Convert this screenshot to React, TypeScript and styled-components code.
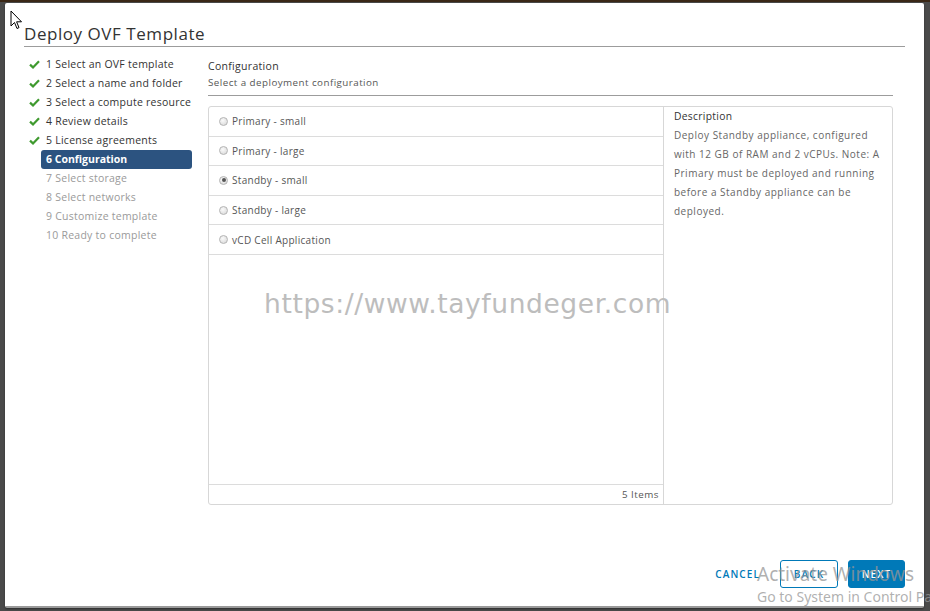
import React from "react";
import styled, { createGlobalStyle } from "styled-components";

const steps = [
  { label: "1 Select an OVF template", state: "done" },
  { label: "2 Select a name and folder", state: "done" },
  { label: "3 Select a compute resource", state: "done" },
  { label: "4 Review details", state: "done" },
  { label: "5 License agreements", state: "done" },
  { label: "6 Configuration", state: "active" },
  { label: "7 Select storage", state: "todo" },
  { label: "8 Select networks", state: "todo" },
  { label: "9 Customize template", state: "todo" },
  { label: "10 Ready to complete", state: "todo" },
];

const options = [
  "Primary - small",
  "Primary - large",
  "Standby - small",
  "Standby - large",
  "vCD Cell Application",
];

const App: React.FC = () => {
  return (
    <>
      <GlobalStyle />
      <Page>
        <Cursor width="13" height="20" viewBox="0 0 13 20">
          <path
            d="M1 1 L1 16 L4.5 12.5 L7 18.5 L9 17.6 L6.6 11.8 L11.5 11.8 Z"
            fill="#fff"
            stroke="#000"
            strokeWidth="1"
            strokeLinejoin="round"
          />
        </Cursor>
        <Modal>
          <Header>
            <Title>Deploy OVF Template</Title>
          </Header>
          <Body>
            <Nav>
              {steps.map((s) => (
                <NavItem key={s.label}>
                  <CheckSlot>
                    {s.state === "done" && (
                      <svg width="11" height="9" viewBox="0 0 11 9">
                        <path
                          d="M1 4.6 L4 7.4 L10 1.2"
                          fill="none"
                          stroke="#3f9a2f"
                          strokeWidth="2.2"
                        />
                      </svg>
                    )}
                  </CheckSlot>
                  <NavLabel $state={s.state}>{s.label}</NavLabel>
                </NavItem>
              ))}
            </Nav>
            <Content>
              <SectionTitle>Configuration</SectionTitle>
              <SectionSub>Select a deployment configuration</SectionSub>
              <Grid>
                <ListPane>
                  <Rows>
                    {options.map((o) => (
                      <Row key={o}>
                        <Radio $checked={o === "Standby - small"} />
                        <RowText>{o}</RowText>
                      </Row>
                    ))}
                  </Rows>
                  <ListFooter>5 Items</ListFooter>
                  <Watermark>https://www.tayfundeger.com</Watermark>
                </ListPane>
                <DescPane>
                  <DescTitle>Description</DescTitle>
                  <DescText>
                    Deploy Standby appliance, configured with 12 GB of RAM and 2
                    vCPUs. Note: A Primary must be deployed and running before a
                    Standby appliance can be deployed.
                  </DescText>
                </DescPane>
              </Grid>
            </Content>
          </Body>
          <Footer>
            <LinkButton>CANCEL</LinkButton>
            <OutlineButton>BACK</OutlineButton>
            <PrimaryButton>NEXT</PrimaryButton>
          </Footer>
        </Modal>
        <Activate>
          <ActivateTitle>Activate Windows</ActivateTitle>
          <ActivateSub>Go to System in Control Panel to activate Windows.</ActivateSub>
        </Activate>
      </Page>
    </>
  );
};

export default App;

const GlobalStyle = createGlobalStyle`
  html, body {
    margin: 0;
    padding: 0;
    background: #4d4d4d;
    overflow: hidden;
  }
  * {
    box-sizing: border-box;
  }
`;

const Page = styled.div`
  position: relative;
  width: 930px;
  height: 611px;
  padding: 1px 6px 3px 5px;
  border-top: 2px solid #3a2716;
  background: #4a4a4a;
  font-family: "Open Sans", "Noto Sans", sans-serif;
  overflow: hidden;
`;

const Cursor = styled.svg`
  position: absolute;
  left: 10px;
  top: 8px;
  z-index: 5;
`;

const Modal = styled.div`
  display: flex;
  flex-direction: column;
  width: 919px;
  height: 605px;
  background: #fff;
  border-radius: 2px;
  border-bottom: 2px solid #9a9a9a;
  box-shadow: 0 1px 2px rgba(0, 0, 0, 0.4);
`;

const Header = styled.div`
  padding: 18px 19px 0 19px;
`;

const Title = styled.h1`
  margin: 0;
  font-size: 17px;
  font-weight: 400;
  line-height: 25px;
  color: #333;
  letter-spacing: 0.55px;
  border-bottom: 1px solid #9c9c9c;
`;

const Body = styled.div`
  flex: 1;
  display: flex;
  gap: 16px;
  padding: 8px 31px 0 19px;
`;

const Nav = styled.div`
  width: 168px;
  display: flex;
  flex-direction: column;
`;

const NavItem = styled.div`
  display: flex;
  align-items: center;
  height: 19px;
`;

const CheckSlot = styled.div`
  width: 17px;
  padding-left: 5px;
  display: flex;
  align-items: center;
`;

const NavLabel = styled.div<{ $state: string }>`
  flex: 1;
  height: 19px;
  line-height: 19px;
  padding-left: 5px;
  font-size: 10.5px;
  border-radius: 3px;
  white-space: nowrap;
  letter-spacing: ${({ $state }) => ($state === "active" ? "0" : "0.25px")};
  color: ${({ $state }) =>
    $state === "active" ? "#fff" : $state === "done" ? "#333" : "#9a9a9a"};
  background: ${({ $state }) => ($state === "active" ? "#2c5380" : "none")};
  font-weight: ${({ $state }) => ($state === "active" ? 700 : 400)};
`;

const Content = styled.div`
  flex: 1;
  display: flex;
  flex-direction: column;
`;

const SectionTitle = styled.div`
  font-size: 10.5px;
  color: #333;
  line-height: 16px;
  margin-top: 3px;
  letter-spacing: 0.3px;
`;

const SectionSub = styled.div`
  font-size: 9.8px;
  color: #565656;
  line-height: 18px;
  letter-spacing: 0.45px;
  padding-bottom: 3px;
  border-bottom: 1px solid #9c9c9c;
  margin-bottom: 10px;
`;

const Grid = styled.div`
  display: flex;
  height: 399px;
  border: 1px solid #d7d7d7;
  border-radius: 3px;
`;

const ListPane = styled.div`
  position: relative;
  width: 455px;
  display: flex;
  flex-direction: column;
  border-right: 1px solid #d7d7d7;
`;

const Rows = styled.div`
  flex: 1;
`;

const Row = styled.div`
  display: flex;
  align-items: center;
  height: 29.6px;
  padding-left: 10px;
  border-bottom: 1px solid #dcdcdc;
`;

const Radio = styled.span<{ $checked: boolean }>`
  position: relative;
  width: 9px;
  height: 9px;
  border-radius: 50%;
  border: 1px solid #b4b4b4;
  background: radial-gradient(circle at 40% 35%, #fafafa, #d5d5d5);
  margin-right: 4px;
  &::after {
    content: "";
    display: ${({ $checked }) => ($checked ? "block" : "none")};
    position: absolute;
    left: 1.5px;
    top: 1.5px;
    width: 4px;
    height: 4px;
    border-radius: 50%;
    background: #555;
  }
`;

const RowText = styled.span`
  font-size: 10px;
  color: #565656;
  letter-spacing: 0.3px;
`;

const ListFooter = styled.div`
  height: 20px;
  line-height: 20px;
  text-align: right;
  padding-right: 4px;
  font-size: 9.8px;
  letter-spacing: 0.5px;
  color: #565656;
  border-top: 1px solid #dcdcdc;
`;

const Watermark = styled.div`
  position: absolute;
  left: 55px;
  top: 181px;
  font-family: "DejaVu Sans", sans-serif;
  font-size: 26.5px;
  letter-spacing: 0.6px;
  color: #bdbdbd;
  white-space: nowrap;
  pointer-events: none;
`;

const DescPane = styled.div`
  flex: 1;
  padding: 0 10px;
`;

const DescTitle = styled.div`
  font-size: 10.3px;
  color: #333;
  line-height: 19px;
  letter-spacing: 0.3px;
`;

const DescText = styled.div`
  font-size: 10px;
  color: #666;
  line-height: 19px;
  letter-spacing: 0.5px;
`;

const Footer = styled.div`
  display: flex;
  justify-content: flex-end;
  align-items: center;
  gap: 10px;
  padding: 0 19px 18px 0;
`;

const ButtonBase = styled.button`
  height: 28px;
  font-family: "Open Sans", "Noto Sans", sans-serif;
  font-size: 10px;
  font-weight: 600;
  letter-spacing: 1.1px;
  border-radius: 3px;
  cursor: pointer;
`;

const LinkButton = styled(ButtonBase)`
  border: none;
  background: none;
  color: #0079b8;
  padding: 0 10px;
`;

const OutlineButton = styled(ButtonBase)`
  width: 58px;
  border: 1px solid #0079b8;
  background: #fff;
  color: #0079b8;
`;

const PrimaryButton = styled(ButtonBase)`
  width: 57px;
  border: 1px solid #0079b8;
  background: #0079b8;
  color: #fff;
`;

const Activate = styled.div`
  position: absolute;
  left: 757px;
  top: 559px;
  white-space: nowrap;
  pointer-events: none;
  font-family: "Noto Sans", "Open Sans", sans-serif;
  color: rgba(150, 150, 150, 0.75);
`;

const ActivateTitle = styled.div`
  font-size: 19px;
  line-height: 26px;
`;

const ActivateSub = styled.div`
  font-size: 14px;
  line-height: 20px;
`;
